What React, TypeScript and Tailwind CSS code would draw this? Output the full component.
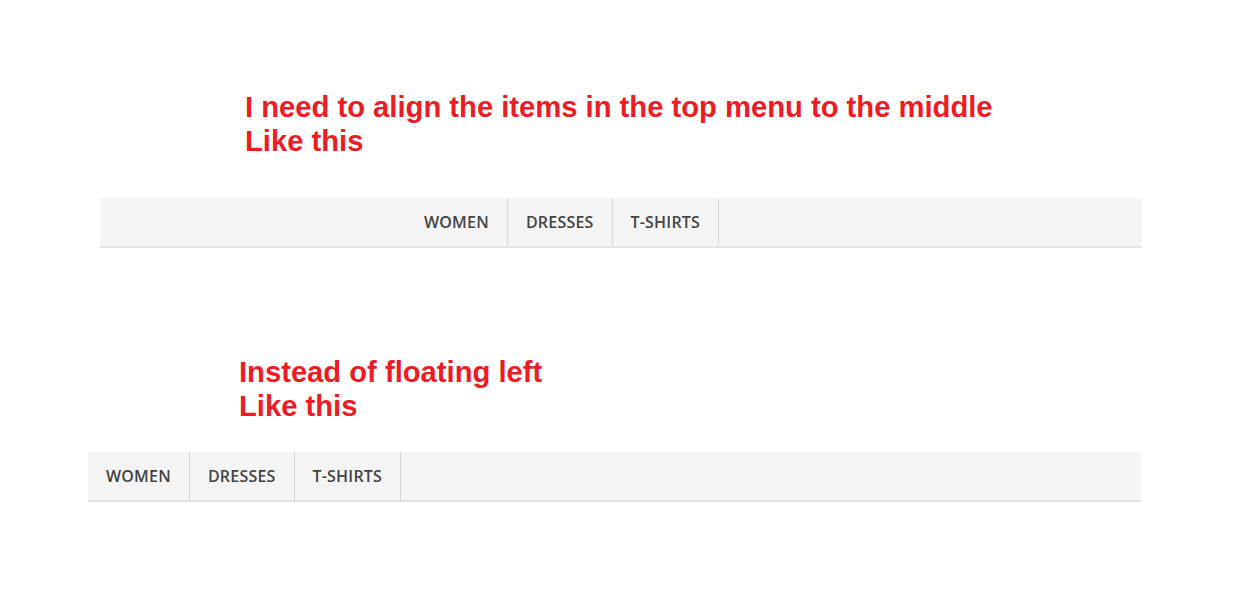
const items = ["WOMEN", "DRESSES", "T-SHIRTS"];

function Menu({ className }: { className: string }) {
  return (
    <nav className={`flex h-[50px] border-b-2 border-[#e4e4e4] bg-[#f5f5f5] ${className}`}>
      <ul className="flex h-[48px]">
        {items.map((item) => (
          <li
            key={item}
            className="flex items-center border-r border-[#d6d6d6] px-[18px] font-['Open_Sans',sans-serif] text-[16px] font-semibold tracking-[0.2px] text-[#444]"
          >
            {item}
          </li>
        ))}
      </ul>
    </nav>
  );
}

function Note({ text, className }: { text: string; className: string }) {
  return (
    <div
      className={`font-['Liberation_Sans',Arial,sans-serif] text-[29.2px] leading-[34px] font-bold text-[#ed1c24] ${className}`}
    >
      <div>{text}</div>
      <div>Like this</div>
    </div>
  );
}

export default function App() {
  return (
    <div className="h-[591px] w-[1257px] bg-white pt-[90px]">
      <Note text="I need to align the items in the top menu to the middle" className="ml-[245px]" />
      <Menu className="mt-[40px] ml-[100px] w-[1042px] pl-[306px]" />
      <Note text="Instead of floating left" className="mt-[107px] ml-[239px]" />
      <Menu className="mt-[29px] ml-[88px] w-[1053px]" />
    </div>
  );
}
